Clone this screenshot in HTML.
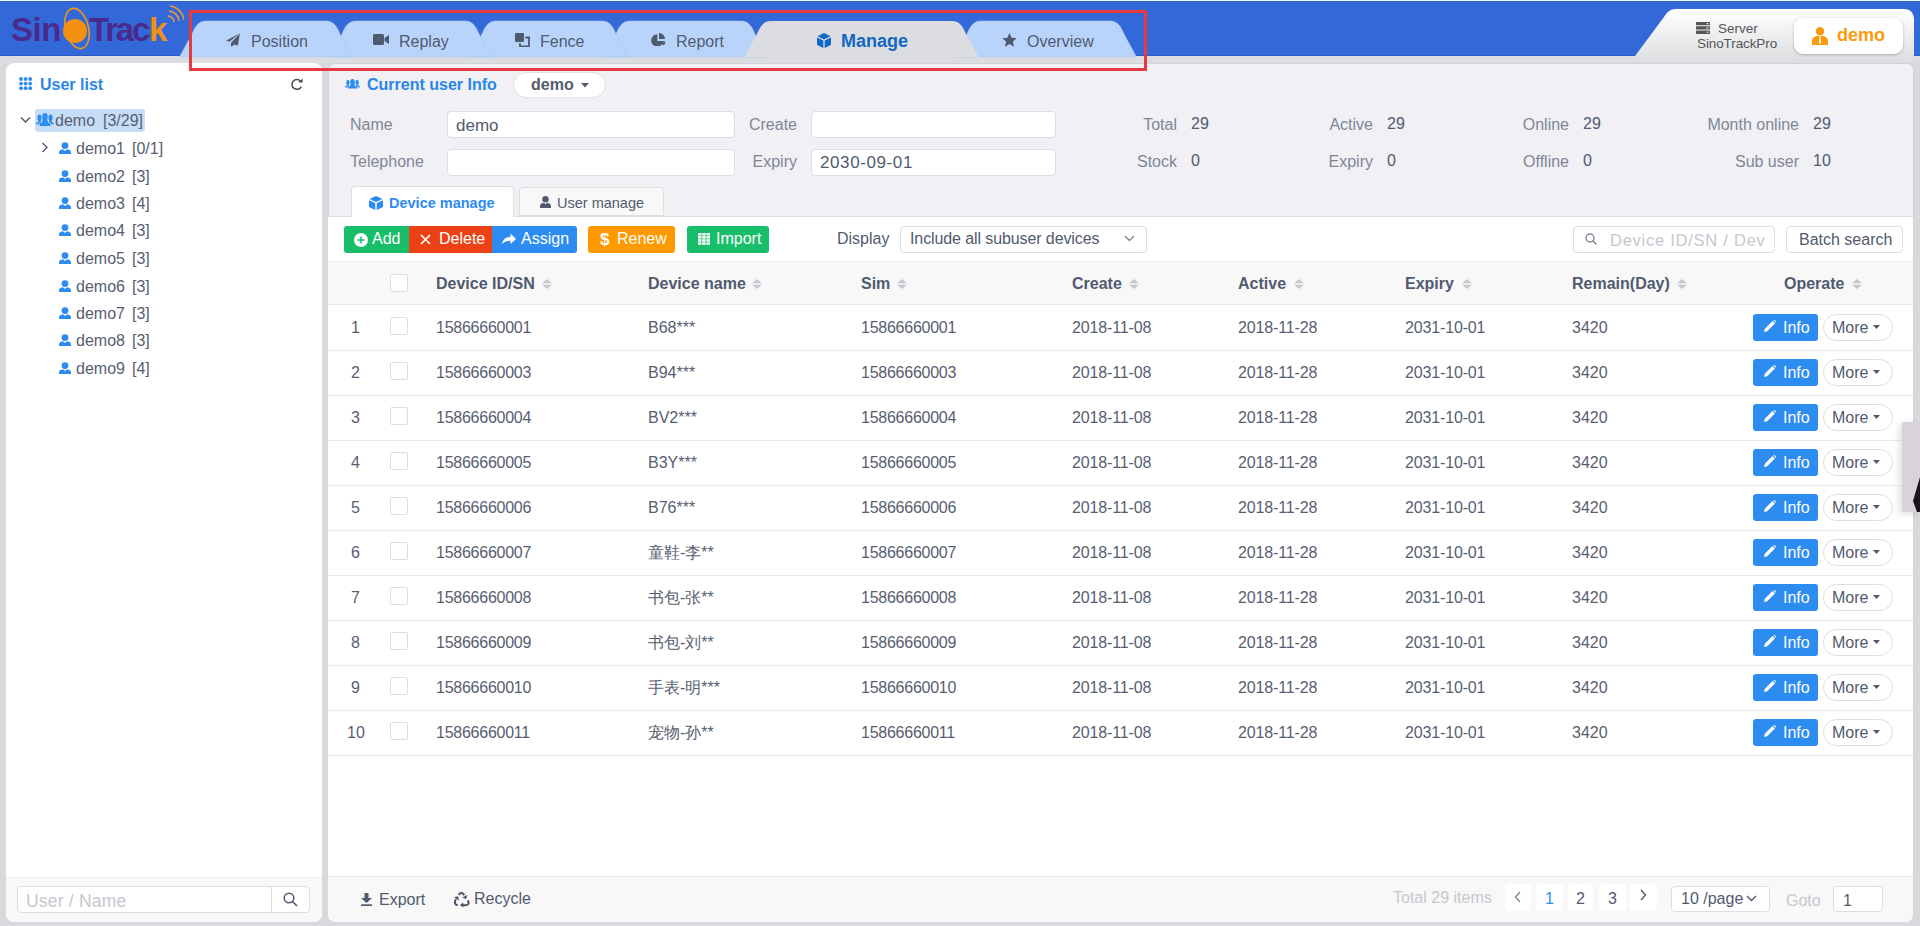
<!DOCTYPE html><html><head><meta charset="utf-8"><style>
html,body{margin:0;padding:0;width:1920px;height:926px;overflow:hidden;background:#d8d9dc;font-family:"Liberation Sans", sans-serif;}
.t{position:absolute;white-space:pre;font-family:"Liberation Sans", sans-serif;}
.r{position:absolute;box-sizing:border-box;}
</style></head><body>
<div class="r" style="left:0px;top:0px;width:1920px;height:56px;background:#3368d9;"></div>
<div class="r" style="left:0px;top:0px;width:1920px;height:1px;background:#e4fafe;"></div>
<div class="r" style="left:0px;top:1px;width:1920px;height:1px;background:#3760b4;"></div>
<div class="r" style="left:0px;top:55px;width:1920px;height:1px;background:#2b5cc4;"></div>
<div class="r" style="left:0px;top:56px;width:1920px;height:7px;background:#dcdde0;"></div>
<svg class="r" style="left:8px;top:4px" width="176" height="50" viewBox="0 0 176 50">
<ellipse cx="69" cy="24.5" rx="11.5" ry="20.5" transform="rotate(-14 69 24.5)" fill="none" stroke="#f0961a" stroke-width="1.6"/>
<circle cx="67" cy="27" r="12" fill="#f49010"/>
<text x="3" y="37" font-family="Liberation Sans" font-weight="bold" font-size="33" fill="#4a2a8c" letter-spacing="-0.5">Sin</text>
<text x="81" y="37" font-family="Liberation Sans" font-weight="bold" font-size="33" fill="#4a2a8c" letter-spacing="-2.2">Trac</text>
<text x="141" y="37" font-family="Liberation Sans" font-weight="bold" font-size="33" fill="#f49010">k</text>
<path d="M160 12 A6 6 0 0 1 166 18" fill="none" stroke="#e99a3a" stroke-width="1.6"/>
<path d="M161 7 A11 11 0 0 1 171 17" fill="none" stroke="#e99a3a" stroke-width="1.6"/>
<path d="M162 2 A16 16 0 0 1 176 16" fill="none" stroke="#e99a3a" stroke-width="1.6"/>
</svg>
<svg class="r" style="left:0px;top:0px" width="1200" height="63" viewBox="0 0 1200 63"><path d="M954.5,57 L967,34 C970,27 973,21 981,21 L1110,21 C1118,21 1121,27 1124,34 L1136.5,57 Z" fill="#b9d4fb" stroke="#a9c6f2" stroke-width="0.6"/><path d="M603.5,57 L616,34 C619,27 622,21 630,21 L741,21 C749,21 752,27 755,34 L767.5,57 Z" fill="#b9d4fb" stroke="#a9c6f2" stroke-width="0.6"/><path d="M469.5,57 L482,34 C485,27 488,21 496,21 L602,21 C610,21 613,27 616,34 L628.5,57 Z" fill="#b9d4fb" stroke="#a9c6f2" stroke-width="0.6"/><path d="M329.5,57 L342,34 C345,27 348,21 356,21 L465,21 C473,21 476,27 479,34 L491.5,57 Z" fill="#b9d4fb" stroke="#a9c6f2" stroke-width="0.6"/><path d="M179.5,57 L192,34 C195,27 198,21 206,21 L326,21 C334,21 337,27 340,34 L352.5,57 Z" fill="#b9d4fb" stroke="#a9c6f2" stroke-width="0.6"/><path d="M744.5,57 L757,34 C760,27 763,21 771,21 L952,21 C960,21 963,27 966,34 L978.5,57 Z" fill="#dcdde0"/></svg>
<svg class="r" style="left:226px;top:33px" width="15" height="14" viewBox="0 0 15 14"><path d="M13 0.7 L0.2 7.4 L3.5 8.7 Z" fill="#505a6e"/><path d="M13.9 0.3 L4.9 9.9 L5.1 13.7 L8.5 11.6 L11.9 12.6 Z" fill="#505a6e"/></svg>
<div class="t" style="left:251px;top:33px;font-size:16px;line-height:18px;color:#4f5b70;">Position</div>
<svg class="r" style="left:373px;top:34px" width="17" height="11" viewBox="0 0 17 11"><rect x="0" y="0" width="11" height="11" rx="1.5" fill="#505a6e"/><path d="M11.5 4 L16 1 L16 10 L11.5 7 Z" fill="#505a6e"/></svg>
<div class="t" style="left:399px;top:33px;font-size:16px;line-height:18px;color:#4f5b70;">Replay</div>
<svg class="r" style="left:515px;top:33px" width="15" height="14" viewBox="0 0 15 14"><rect x="0" y="0" width="9" height="9" rx="1" fill="#505a6e"/><path d="M10.3 4.5 H14 V13.5 H5 V10.2" fill="none" stroke="#505a6e" stroke-width="1.8"/></svg>
<div class="t" style="left:540px;top:33px;font-size:16px;line-height:18px;color:#4f5b70;">Fence</div>
<svg class="r" style="left:651px;top:33px" width="15" height="13" viewBox="0 0 15 13"><path d="M6.3 1.2 A6.2 6.2 0 1 0 12.5 8 L6.3 8 Z" fill="#505a6e"/><path d="M8 0 A6 6 0 0 1 14 6 L8 6 Z" fill="#505a6e"/><path d="M8.3 8.5 L14.5 8.5 A6 6 0 0 1 12.6 12.6 Z" fill="#505a6e"/></svg>
<div class="t" style="left:676px;top:33px;font-size:16px;line-height:18px;color:#4f5b70;">Report</div>
<svg class="r" style="left:817px;top:33px" width="14" height="15" viewBox="0 0 14 15"><path d="M7 0 L13.5 3.2 L7 6.4 L0.5 3.2 Z" fill="#0f67c6"/><path d="M0 4.4 L6.3 7.5 L6.3 15 L0 11.8 Z" fill="#0f67c6"/><path d="M14 4.4 L7.7 7.5 L7.7 15 L14 11.8 Z" fill="#0f67c6"/></svg>
<div class="t" style="left:841px;top:31px;font-size:18px;line-height:20px;color:#0f67c6;font-weight:bold;">Manage</div>
<svg class="r" style="left:1002px;top:33px" width="15" height="14" viewBox="0 0 15 14"><path d="M7.5 0 L9.6 4.7 L14.8 5.2 L10.9 8.6 L12 13.8 L7.5 11.1 L3 13.8 L4.1 8.6 L0.2 5.2 L5.4 4.7 Z" fill="#505a6e"/></svg>
<div class="t" style="left:1027px;top:33px;font-size:16px;line-height:18px;color:#4f5b70;">Overview</div>
<svg class="r" style="left:1630px;top:5px" width="290" height="58" viewBox="0 0 290 58"><defs><linearGradient id="hg" x1="0" y1="0" x2="0" y2="1"><stop offset="0" stop-color="#ffffff"/><stop offset="1" stop-color="#dcdde0"/></linearGradient></defs>
<path d="M5,51 L34,12 C37,7 40,4 46,4 L274,4 C280,4 284,8 284,14 L284,58 L0,58 Z" fill="url(#hg)"/></svg>
<svg class="r" style="left:1696px;top:22px" width="14" height="12" viewBox="0 0 14 12"><rect x="0" y="0" width="14" height="3.3" rx="0.6" fill="#555"/><rect x="0" y="4.3" width="14" height="3.3" rx="0.6" fill="#555"/><rect x="0" y="8.6" width="14" height="3.3" rx="0.6" fill="#555"/><rect x="10.5" y="1" width="2" height="1.2" fill="#ddd"/><rect x="10.5" y="5.3" width="2" height="1.2" fill="#ddd"/><rect x="10.5" y="9.6" width="2" height="1.2" fill="#ddd"/></svg>
<div class="t" style="left:1718px;top:21px;font-size:13.5px;line-height:15px;color:#555;">Server</div>
<div class="t" style="left:1697px;top:36px;font-size:13.5px;line-height:15px;color:#555;letter-spacing:-0.1px;">SinoTrackPro</div>
<div class="r" style="left:1794px;top:18px;width:109px;height:36px;background:#fff;border-radius:9px;box-shadow:0 1px 3px rgba(0,0,0,0.25);"></div>
<svg class="r" style="left:1812px;top:27px" width="16" height="18" viewBox="0 0 16 18"><circle cx="8" cy="4.2" r="4.2" fill="#f99b0a"/><path d="M0 18 L0 14 C0 10.5 3 9 5.5 9 L10.5 9 C13 9 16 10.5 16 14 L16 18 Z" fill="#f99b0a"/><path d="M7 9.5 L9 9.5 L8.6 11 L9 16 L8 17 L7 16 L7.4 11 Z" fill="#fff"/></svg>
<div class="t" style="left:1837px;top:25px;font-size:18px;line-height:20px;color:#f99b0a;font-weight:bold;">demo</div>
<div class="r" style="left:6px;top:63px;width:316px;height:859px;background:#fff;border-radius:8px;"></div>
<svg class="r" style="left:19px;top:77px" width="14" height="14" viewBox="0 0 14 14"><circle cx="2.0" cy="2.0" r="1.9" fill="#2d8cf0"/><circle cx="6.6" cy="2.0" r="1.9" fill="#2d8cf0"/><circle cx="11.2" cy="2.0" r="1.9" fill="#2d8cf0"/><circle cx="2.0" cy="6.6" r="1.9" fill="#2d8cf0"/><circle cx="6.6" cy="6.6" r="1.9" fill="#2d8cf0"/><circle cx="11.2" cy="6.6" r="1.9" fill="#2d8cf0"/><circle cx="2.0" cy="11.2" r="1.9" fill="#2d8cf0"/><circle cx="6.6" cy="11.2" r="1.9" fill="#2d8cf0"/><circle cx="11.2" cy="11.2" r="1.9" fill="#2d8cf0"/></svg>
<div class="t" style="left:40px;top:76px;font-size:16px;line-height:18px;color:#2a86e6;font-weight:bold;">User list</div>
<svg class="r" style="left:290px;top:77px" width="14" height="14" viewBox="0 0 14 14"><path d="M10.6 4.2 A4.9 4.9 0 1 0 11.3 9.6" fill="none" stroke="#4a4a4a" stroke-width="1.5"/><path d="M8.3 5.6 L12.6 5.6 L12.6 1.4 Z" fill="#4a4a4a"/></svg>
<svg class="r" style="left:20px;top:116px" width="11" height="8" viewBox="0 0 11 8"><path d="M1 1.5 L5.5 6 L10 1.5" fill="none" stroke="#515a6e" stroke-width="1.4"/></svg>
<div class="r" style="left:35px;top:109px;width:110px;height:23px;background:#c6ddf8;border-radius:3px;"></div>
<svg class="r" style="left:36px;top:113px" width="18" height="14" viewBox="0 0 18 14"><g transform="scale(1.2 1.35)"><ellipse cx="7.5" cy="3" rx="2.3" ry="3" fill="#2d8cf0"/><path d="M5.6 5 L9.4 5 L10 7.2 L12 7.5 L12 9.6 L3 9.6 L3 7.5 L5 7.2 Z" fill="#2d8cf0"/><ellipse cx="2.9" cy="3.5" rx="1.7" ry="2.4" fill="#2d8cf0"/><path d="M1.9 5.5 L3.9 5.5 L4.3 7 L2.6 7.3 L2.6 8.4 L0 8.4 L0.3 7.2 L1.6 6.8 Z" fill="#2d8cf0"/><ellipse cx="12.1" cy="3.5" rx="1.7" ry="2.4" fill="#2d8cf0"/><path d="M13.1 5.5 L11.1 5.5 L10.7 7 L12.4 7.3 L12.4 8.4 L15 8.4 L14.7 7.2 L13.4 6.8 Z" fill="#2d8cf0"/></g></svg>
<div class="t" style="left:55px;top:112px;font-size:16px;line-height:18px;color:#575e70;">demo</div>
<div class="t" style="left:103px;top:112px;font-size:16px;line-height:18px;color:#575e70;">[3/29]</div>
<svg class="r" style="left:41px;top:142px" width="8" height="11" viewBox="0 0 8 11"><path d="M1.5 1 L6 5.5 L1.5 10" fill="none" stroke="#515a6e" stroke-width="1.4"/></svg>
<svg class="r" style="left:59px;top:142px" width="12" height="12" viewBox="0 0 12 12"><circle cx="6" cy="3.6" r="3.4" fill="#2d8cf0"/><path d="M0 12 V10.5 C0 8 2.5 7.5 4 7.2 L6 9 L8 7.2 C9.5 7.5 12 8 12 10.5 V12 Z" fill="#2d8cf0"/></svg>
<div class="t" style="left:76px;top:140px;font-size:16px;line-height:18px;color:#575e70;">demo1</div>
<div class="t" style="left:132px;top:140px;font-size:16px;line-height:18px;color:#575e70;">[0/1]</div>
<svg class="r" style="left:59px;top:170px" width="12" height="12" viewBox="0 0 12 12"><circle cx="6" cy="3.6" r="3.4" fill="#2d8cf0"/><path d="M0 12 V10.5 C0 8 2.5 7.5 4 7.2 L6 9 L8 7.2 C9.5 7.5 12 8 12 10.5 V12 Z" fill="#2d8cf0"/></svg>
<div class="t" style="left:76px;top:168px;font-size:16px;line-height:18px;color:#575e70;">demo2</div>
<div class="t" style="left:132px;top:168px;font-size:16px;line-height:18px;color:#575e70;">[3]</div>
<svg class="r" style="left:59px;top:197px" width="12" height="12" viewBox="0 0 12 12"><circle cx="6" cy="3.6" r="3.4" fill="#2d8cf0"/><path d="M0 12 V10.5 C0 8 2.5 7.5 4 7.2 L6 9 L8 7.2 C9.5 7.5 12 8 12 10.5 V12 Z" fill="#2d8cf0"/></svg>
<div class="t" style="left:76px;top:195px;font-size:16px;line-height:18px;color:#575e70;">demo3</div>
<div class="t" style="left:132px;top:195px;font-size:16px;line-height:18px;color:#575e70;">[4]</div>
<svg class="r" style="left:59px;top:224px" width="12" height="12" viewBox="0 0 12 12"><circle cx="6" cy="3.6" r="3.4" fill="#2d8cf0"/><path d="M0 12 V10.5 C0 8 2.5 7.5 4 7.2 L6 9 L8 7.2 C9.5 7.5 12 8 12 10.5 V12 Z" fill="#2d8cf0"/></svg>
<div class="t" style="left:76px;top:222px;font-size:16px;line-height:18px;color:#575e70;">demo4</div>
<div class="t" style="left:132px;top:222px;font-size:16px;line-height:18px;color:#575e70;">[3]</div>
<svg class="r" style="left:59px;top:252px" width="12" height="12" viewBox="0 0 12 12"><circle cx="6" cy="3.6" r="3.4" fill="#2d8cf0"/><path d="M0 12 V10.5 C0 8 2.5 7.5 4 7.2 L6 9 L8 7.2 C9.5 7.5 12 8 12 10.5 V12 Z" fill="#2d8cf0"/></svg>
<div class="t" style="left:76px;top:250px;font-size:16px;line-height:18px;color:#575e70;">demo5</div>
<div class="t" style="left:132px;top:250px;font-size:16px;line-height:18px;color:#575e70;">[3]</div>
<svg class="r" style="left:59px;top:280px" width="12" height="12" viewBox="0 0 12 12"><circle cx="6" cy="3.6" r="3.4" fill="#2d8cf0"/><path d="M0 12 V10.5 C0 8 2.5 7.5 4 7.2 L6 9 L8 7.2 C9.5 7.5 12 8 12 10.5 V12 Z" fill="#2d8cf0"/></svg>
<div class="t" style="left:76px;top:278px;font-size:16px;line-height:18px;color:#575e70;">demo6</div>
<div class="t" style="left:132px;top:278px;font-size:16px;line-height:18px;color:#575e70;">[3]</div>
<svg class="r" style="left:59px;top:307px" width="12" height="12" viewBox="0 0 12 12"><circle cx="6" cy="3.6" r="3.4" fill="#2d8cf0"/><path d="M0 12 V10.5 C0 8 2.5 7.5 4 7.2 L6 9 L8 7.2 C9.5 7.5 12 8 12 10.5 V12 Z" fill="#2d8cf0"/></svg>
<div class="t" style="left:76px;top:305px;font-size:16px;line-height:18px;color:#575e70;">demo7</div>
<div class="t" style="left:132px;top:305px;font-size:16px;line-height:18px;color:#575e70;">[3]</div>
<svg class="r" style="left:59px;top:334px" width="12" height="12" viewBox="0 0 12 12"><circle cx="6" cy="3.6" r="3.4" fill="#2d8cf0"/><path d="M0 12 V10.5 C0 8 2.5 7.5 4 7.2 L6 9 L8 7.2 C9.5 7.5 12 8 12 10.5 V12 Z" fill="#2d8cf0"/></svg>
<div class="t" style="left:76px;top:332px;font-size:16px;line-height:18px;color:#575e70;">demo8</div>
<div class="t" style="left:132px;top:332px;font-size:16px;line-height:18px;color:#575e70;">[3]</div>
<svg class="r" style="left:59px;top:362px" width="12" height="12" viewBox="0 0 12 12"><circle cx="6" cy="3.6" r="3.4" fill="#2d8cf0"/><path d="M0 12 V10.5 C0 8 2.5 7.5 4 7.2 L6 9 L8 7.2 C9.5 7.5 12 8 12 10.5 V12 Z" fill="#2d8cf0"/></svg>
<div class="t" style="left:76px;top:360px;font-size:16px;line-height:18px;color:#575e70;">demo9</div>
<div class="t" style="left:132px;top:360px;font-size:16px;line-height:18px;color:#575e70;">[4]</div>
<div class="r" style="left:6px;top:877px;width:316px;height:45px;background:#f8f8f9;border-top:1px solid #e8eaec;border-radius:0 0 8px 8px;"></div>
<div class="r" style="left:17px;top:886px;width:293px;height:27px;background:#fff;border:1px solid #dcdee2;border-radius:4px;"></div>
<div class="r" style="left:271px;top:887px;width:1px;height:25px;background:#dcdee2;"></div>
<div class="t" style="left:26px;top:891px;font-size:17.5px;line-height:20px;color:#c5c8ce;letter-spacing:0.2px;">User / Name</div>
<svg class="r" style="left:283px;top:892px" width="15" height="15" viewBox="0 0 15 15"><circle cx="6" cy="6" r="4.8" fill="none" stroke="#515a6e" stroke-width="1.5"/><path d="M9.5 9.5 L13.5 13.5" stroke="#515a6e" stroke-width="1.7" stroke-linecap="round"/></svg>
<div class="r" style="left:328px;top:63px;width:1586px;height:859px;background:#f0f0f5;border:1px solid #d2d3d7;border-radius:7px;"></div>
<div class="r" style="left:328px;top:217px;width:1585px;height:660px;background:#fff;"></div>
<div class="r" style="left:328px;top:876px;width:1585px;height:46px;background:#f8f8f9;border-top:1px solid #e8eaec;border-radius:0 0 7px 7px;"></div>
<svg class="r" style="left:345px;top:79px" width="15" height="10" viewBox="0 0 15 10"><ellipse cx="7.5" cy="3" rx="2.3" ry="3" fill="#2d8cf0"/><path d="M5.6 5 L9.4 5 L10 7.2 L12 7.5 L12 9.6 L3 9.6 L3 7.5 L5 7.2 Z" fill="#2d8cf0"/><ellipse cx="2.9" cy="3.5" rx="1.7" ry="2.4" fill="#2d8cf0"/><path d="M1.9 5.5 L3.9 5.5 L4.3 7 L2.6 7.3 L2.6 8.4 L0 8.4 L0.3 7.2 L1.6 6.8 Z" fill="#2d8cf0"/><ellipse cx="12.1" cy="3.5" rx="1.7" ry="2.4" fill="#2d8cf0"/><path d="M13.1 5.5 L11.1 5.5 L10.7 7 L12.4 7.3 L12.4 8.4 L15 8.4 L14.7 7.2 L13.4 6.8 Z" fill="#2d8cf0"/></svg>
<div class="t" style="left:367px;top:76px;font-size:16px;line-height:18px;color:#2a86e6;font-weight:bold;">Current user Info</div>
<div class="r" style="left:513px;top:72px;width:93px;height:26px;background:#fff;border:1px solid #dfe1e5;border-radius:13px;"></div>
<div class="t" style="left:531px;top:76px;font-size:16px;line-height:18px;color:#515a6e;font-weight:bold;">demo</div>
<svg class="r" style="left:581px;top:83px" width="8" height="5" viewBox="0 0 8 5"><path d="M0 0 L8 0 L4 4.5 Z" fill="#515a6e"/></svg>
<div class="t" style="left:350px;top:116px;font-size:16px;line-height:18px;color:#808695;">Name</div>
<div class="t" style="left:350px;top:153px;font-size:16px;line-height:18px;color:#808695;">Telephone</div>
<div class="r" style="left:447px;top:111px;width:288px;height:27px;background:#fff;border:1px solid #dcdee2;border-radius:4px;"></div>
<div class="r" style="left:447px;top:149px;width:288px;height:27px;background:#fff;border:1px solid #dcdee2;border-radius:4px;"></div>
<div class="t" style="left:456px;top:116px;font-size:17px;line-height:19px;color:#515a6e;">demo</div>
<div class="t" style="right:1123px;top:116px;font-size:16px;line-height:18px;color:#808695;">Create</div>
<div class="t" style="right:1123px;top:153px;font-size:16px;line-height:18px;color:#808695;">Expiry</div>
<div class="r" style="left:811px;top:111px;width:245px;height:27px;background:#fff;border:1px solid #dcdee2;border-radius:4px;"></div>
<div class="r" style="left:811px;top:149px;width:245px;height:27px;background:#fff;border:1px solid #dcdee2;border-radius:4px;"></div>
<div class="t" style="left:820px;top:153px;font-size:17px;line-height:19px;color:#515a6e;letter-spacing:0.6px;">2030-09-01</div>
<div class="t" style="right:743px;top:116px;font-size:16px;line-height:18px;color:#808695;">Total</div>
<div class="t" style="left:1191px;top:115px;font-size:16px;line-height:18px;color:#515a6e;">29</div>
<div class="t" style="right:743px;top:153px;font-size:16px;line-height:18px;color:#808695;">Stock</div>
<div class="t" style="left:1191px;top:152px;font-size:16px;line-height:18px;color:#515a6e;">0</div>
<div class="t" style="right:547px;top:116px;font-size:16px;line-height:18px;color:#808695;">Active</div>
<div class="t" style="left:1387px;top:115px;font-size:16px;line-height:18px;color:#515a6e;">29</div>
<div class="t" style="right:547px;top:153px;font-size:16px;line-height:18px;color:#808695;">Expiry</div>
<div class="t" style="left:1387px;top:152px;font-size:16px;line-height:18px;color:#515a6e;">0</div>
<div class="t" style="right:351px;top:116px;font-size:16px;line-height:18px;color:#808695;">Online</div>
<div class="t" style="left:1583px;top:115px;font-size:16px;line-height:18px;color:#515a6e;">29</div>
<div class="t" style="right:351px;top:153px;font-size:16px;line-height:18px;color:#808695;">Offline</div>
<div class="t" style="left:1583px;top:152px;font-size:16px;line-height:18px;color:#515a6e;">0</div>
<div class="t" style="right:121px;top:116px;font-size:16px;line-height:18px;color:#808695;">Month online</div>
<div class="t" style="left:1813px;top:115px;font-size:16px;line-height:18px;color:#515a6e;">29</div>
<div class="t" style="right:121px;top:153px;font-size:16px;line-height:18px;color:#808695;">Sub user</div>
<div class="t" style="left:1813px;top:152px;font-size:16px;line-height:18px;color:#515a6e;">10</div>
<div class="r" style="left:328px;top:216px;width:1585px;height:1px;background:#dcdee2;"></div>
<div class="r" style="left:351px;top:186px;width:163px;height:31px;background:#fff;border:1px solid #dcdee2;border-bottom:none;border-radius:4px 4px 0 0;"></div>
<div class="r" style="left:519px;top:187px;width:145px;height:29px;background:#f8f8f9;border:1px solid #dcdee2;border-radius:4px 4px 0 0;"></div>
<svg class="r" style="left:369px;top:196px" width="14" height="14" viewBox="0 0 14 14"><path d="M7 0 L13.5 3 L7 6 L0.5 3 Z" fill="#2d8cf0"/><path d="M0 4.2 L6.3 7.2 L6.3 14 L0 11 Z" fill="#2d8cf0"/><path d="M14 4.2 L7.7 7.2 L7.7 14 L14 11 Z" fill="#2d8cf0"/></svg>
<div class="t" style="left:389px;top:195px;font-size:14.5px;line-height:16px;color:#2d8cf0;font-weight:bold;">Device manage</div>
<svg class="r" style="left:540px;top:196px" width="11" height="12" viewBox="0 0 11 12"><circle cx="5.5" cy="3.3" r="3.2" fill="#515a6e"/><path d="M0 12 V10 C0 7.8 2.5 7 4 6.8 L5.5 8.3 L7 6.8 C8.5 7 11 7.8 11 10 V12 Z" fill="#515a6e"/></svg>
<div class="t" style="left:557px;top:195px;font-size:14.5px;line-height:16px;color:#515a6e;">User manage</div>
<div class="r" style="left:344px;top:226px;width:65px;height:27px;background:#19be6b;border-radius:3px 0 0 3px;"></div>
<div class="r" style="left:409px;top:226px;width:83px;height:27px;background:#ed4014;"></div>
<div class="r" style="left:492px;top:226px;width:85px;height:27px;background:#2d8cf0;border-radius:0 3px 3px 0;"></div>
<div class="r" style="left:588px;top:226px;width:87px;height:27px;background:#ff9900;border-radius:3px;"></div>
<div class="r" style="left:687px;top:226px;width:82px;height:27px;background:#19be6b;border-radius:3px;"></div>
<svg class="r" style="left:354px;top:233px" width="14" height="14" viewBox="0 0 14 14"><circle cx="7" cy="7" r="7" fill="#fff"/><path d="M7 3.5 V10.5 M3.5 7 H10.5" stroke="#19be6b" stroke-width="1.6"/></svg>
<div class="t" style="left:372px;top:230px;font-size:16px;line-height:18px;color:#fff;">Add</div>
<svg class="r" style="left:420px;top:234px" width="11" height="11" viewBox="0 0 11 11"><path d="M1 1 L10 10 M10 1 L1 10" stroke="#fff" stroke-width="1.7"/></svg>
<div class="t" style="left:439px;top:230px;font-size:16px;line-height:18px;color:#fff;">Delete</div>
<svg class="r" style="left:502px;top:233px" width="14" height="12" viewBox="0 0 14 12"><path d="M0 11 C1 6 4 4 8.5 4 V0.5 L14 6 L8.5 11 V7.8 C5 7.8 2.5 8.5 0 11 Z" fill="#fff"/></svg>
<div class="t" style="left:521px;top:230px;font-size:16px;line-height:18px;color:#fff;">Assign</div>
<div class="t" style="left:600px;top:230px;font-size:17px;line-height:19px;color:#fff;font-weight:bold;">$</div>
<div class="t" style="left:617px;top:230px;font-size:16px;line-height:18px;color:#fff;">Renew</div>
<svg class="r" style="left:698px;top:233px" width="12" height="12" viewBox="0 0 12 12"><rect x="0.0" y="0.0" width="3.5" height="2.5" fill="#fff"/><rect x="4.2" y="0.0" width="3.5" height="2.5" fill="#fff"/><rect x="8.4" y="0.0" width="3.5" height="2.5" fill="#fff"/><rect x="0.0" y="3.1" width="3.5" height="2.5" fill="#fff"/><rect x="4.2" y="3.1" width="3.5" height="2.5" fill="#fff"/><rect x="8.4" y="3.1" width="3.5" height="2.5" fill="#fff"/><rect x="0.0" y="6.2" width="3.5" height="2.5" fill="#fff"/><rect x="4.2" y="6.2" width="3.5" height="2.5" fill="#fff"/><rect x="8.4" y="6.2" width="3.5" height="2.5" fill="#fff"/><rect x="0.0" y="9.3" width="3.5" height="2.5" fill="#fff"/><rect x="4.2" y="9.3" width="3.5" height="2.5" fill="#fff"/><rect x="8.4" y="9.3" width="3.5" height="2.5" fill="#fff"/></svg>
<div class="t" style="left:716px;top:230px;font-size:16px;line-height:18px;color:#fff;">Import</div>
<div class="t" style="left:837px;top:230px;font-size:16px;line-height:18px;color:#515a6e;">Display</div>
<div class="r" style="left:900px;top:226px;width:247px;height:27px;background:#fff;border:1px solid #dcdee2;border-radius:4px;"></div>
<div class="t" style="left:910px;top:230px;font-size:16px;line-height:18px;color:#515a6e;letter-spacing:-0.1px;">Include all subuser devices</div>
<svg class="r" style="left:1124px;top:235px" width="11" height="7" viewBox="0 0 11 7"><path d="M1 1 L5.5 5.5 L10 1" fill="none" stroke="#808695" stroke-width="1.4"/></svg>
<div class="r" style="left:1573px;top:226px;width:202px;height:27px;background:#fff;border:1px solid #dcdee2;border-radius:4px;"></div>
<svg class="r" style="left:1585px;top:233px" width="12" height="12" viewBox="0 0 12 12"><circle cx="5" cy="5" r="4" fill="none" stroke="#808695" stroke-width="1.4"/><path d="M8 8 L11 11" stroke="#808695" stroke-width="1.5" stroke-linecap="round"/></svg>
<div class="t" style="left:1610px;top:231px;font-size:16.5px;line-height:19px;color:#c5c8ce;letter-spacing:0.75px;">Device ID/SN / Dev</div>
<div class="r" style="left:1786px;top:226px;width:117px;height:27px;background:#fff;border:1px solid #dcdee2;border-radius:4px;"></div>
<div class="t" style="left:1799px;top:231px;font-size:16px;line-height:18px;color:#515a6e;">Batch search</div>
<div class="r" style="left:328px;top:261px;width:1585px;height:1px;background:#e8eaec;"></div>
<div class="r" style="left:328px;top:262px;width:1585px;height:42px;background:#f8f8f9;"></div>
<div class="r" style="left:328px;top:304px;width:1585px;height:1px;background:#e8eaec;"></div>
<div class="r" style="left:390px;top:274px;width:18px;height:18px;background:#fff;border:1px solid #dcdee2;border-radius:2px;"></div>
<div class="t" style="left:436px;top:275px;font-size:16px;line-height:18px;color:#515a6e;font-weight:bold;">Device ID/SN</div>
<svg class="r" style="left:542px;top:279px" width="10" height="10" viewBox="0 0 10 10"><path d="M5 0 L10 4.2 L0 4.2 Z" fill="#c5c8ce"/><path d="M0 5.8 L10 5.8 L5 10 Z" fill="#c5c8ce"/></svg>
<div class="t" style="left:648px;top:275px;font-size:16px;line-height:18px;color:#515a6e;font-weight:bold;">Device name</div>
<svg class="r" style="left:752px;top:279px" width="10" height="10" viewBox="0 0 10 10"><path d="M5 0 L10 4.2 L0 4.2 Z" fill="#c5c8ce"/><path d="M0 5.8 L10 5.8 L5 10 Z" fill="#c5c8ce"/></svg>
<div class="t" style="left:861px;top:275px;font-size:16px;line-height:18px;color:#515a6e;font-weight:bold;">Sim</div>
<svg class="r" style="left:897px;top:279px" width="10" height="10" viewBox="0 0 10 10"><path d="M5 0 L10 4.2 L0 4.2 Z" fill="#c5c8ce"/><path d="M0 5.8 L10 5.8 L5 10 Z" fill="#c5c8ce"/></svg>
<div class="t" style="left:1072px;top:275px;font-size:16px;line-height:18px;color:#515a6e;font-weight:bold;">Create</div>
<svg class="r" style="left:1129px;top:279px" width="10" height="10" viewBox="0 0 10 10"><path d="M5 0 L10 4.2 L0 4.2 Z" fill="#c5c8ce"/><path d="M0 5.8 L10 5.8 L5 10 Z" fill="#c5c8ce"/></svg>
<div class="t" style="left:1238px;top:275px;font-size:16px;line-height:18px;color:#515a6e;font-weight:bold;">Active</div>
<svg class="r" style="left:1294px;top:279px" width="10" height="10" viewBox="0 0 10 10"><path d="M5 0 L10 4.2 L0 4.2 Z" fill="#c5c8ce"/><path d="M0 5.8 L10 5.8 L5 10 Z" fill="#c5c8ce"/></svg>
<div class="t" style="left:1405px;top:275px;font-size:16px;line-height:18px;color:#515a6e;font-weight:bold;">Expiry</div>
<svg class="r" style="left:1462px;top:279px" width="10" height="10" viewBox="0 0 10 10"><path d="M5 0 L10 4.2 L0 4.2 Z" fill="#c5c8ce"/><path d="M0 5.8 L10 5.8 L5 10 Z" fill="#c5c8ce"/></svg>
<div class="t" style="left:1572px;top:275px;font-size:16px;line-height:18px;color:#515a6e;font-weight:bold;">Remain(Day)</div>
<svg class="r" style="left:1677px;top:279px" width="10" height="10" viewBox="0 0 10 10"><path d="M5 0 L10 4.2 L0 4.2 Z" fill="#c5c8ce"/><path d="M0 5.8 L10 5.8 L5 10 Z" fill="#c5c8ce"/></svg>
<div class="t" style="left:1784px;top:275px;font-size:16px;line-height:18px;color:#515a6e;font-weight:bold;">Operate</div>
<svg class="r" style="left:1852px;top:279px" width="10" height="10" viewBox="0 0 10 10"><path d="M5 0 L10 4.2 L0 4.2 Z" fill="#c5c8ce"/><path d="M0 5.8 L10 5.8 L5 10 Z" fill="#c5c8ce"/></svg>
<div class="r" style="left:328px;top:350px;width:1585px;height:1px;background:#e8eaec;"></div>
<div class="t" style="left:351px;top:319px;font-size:16px;line-height:18px;color:#575e70;">1</div>
<div class="r" style="left:390px;top:317px;width:18px;height:18px;background:#fff;border:1px solid #dcdee2;border-radius:2px;"></div>
<div class="t" style="left:436px;top:319px;font-size:16px;line-height:18px;color:#575e70;letter-spacing:-0.25px;">15866660001</div>
<div class="t" style="left:648px;top:319px;font-size:16px;line-height:18px;color:#575e70;">B68***</div>
<div class="t" style="left:861px;top:319px;font-size:16px;line-height:18px;color:#575e70;letter-spacing:-0.25px;">15866660001</div>
<div class="t" style="left:1072px;top:319px;font-size:16px;line-height:18px;color:#575e70;letter-spacing:-0.15px;">2018-11-08</div>
<div class="t" style="left:1238px;top:319px;font-size:16px;line-height:18px;color:#575e70;letter-spacing:-0.15px;">2018-11-28</div>
<div class="t" style="left:1405px;top:319px;font-size:16px;line-height:18px;color:#575e70;letter-spacing:-0.15px;">2031-10-01</div>
<div class="t" style="left:1572px;top:319px;font-size:16px;line-height:18px;color:#575e70;">3420</div>
<div class="r" style="left:1753px;top:314px;width:65px;height:27px;background:#2d8cf0;border-radius:3px;"></div>
<svg class="r" style="left:1764px;top:320px" width="12" height="12" viewBox="0 0 12 12"><path d="M0 12 L0.8 8.8 L8.5 1.1 L10.9 3.5 L3.2 11.2 Z M9.3 0.3 L10.3 -0.2 L12.2 1.7 L11.7 2.7 Z" fill="#fff"/></svg>
<div class="t" style="left:1783px;top:319px;font-size:16px;line-height:18px;color:#fff;">Info</div>
<div class="r" style="left:1823px;top:314px;width:70px;height:27px;background:#fff;border:1px solid #dcdee2;border-radius:14px;"></div>
<div class="t" style="left:1832px;top:319px;font-size:16px;line-height:18px;color:#515a6e;">More</div>
<svg class="r" style="left:1873px;top:325px" width="7" height="4" viewBox="0 0 7 4"><path d="M0 0 L7 0 L3.5 4 Z" fill="#515a6e"/></svg>
<div class="r" style="left:328px;top:395px;width:1585px;height:1px;background:#e8eaec;"></div>
<div class="t" style="left:351px;top:364px;font-size:16px;line-height:18px;color:#575e70;">2</div>
<div class="r" style="left:390px;top:362px;width:18px;height:18px;background:#fff;border:1px solid #dcdee2;border-radius:2px;"></div>
<div class="t" style="left:436px;top:364px;font-size:16px;line-height:18px;color:#575e70;letter-spacing:-0.25px;">15866660003</div>
<div class="t" style="left:648px;top:364px;font-size:16px;line-height:18px;color:#575e70;">B94***</div>
<div class="t" style="left:861px;top:364px;font-size:16px;line-height:18px;color:#575e70;letter-spacing:-0.25px;">15866660003</div>
<div class="t" style="left:1072px;top:364px;font-size:16px;line-height:18px;color:#575e70;letter-spacing:-0.15px;">2018-11-08</div>
<div class="t" style="left:1238px;top:364px;font-size:16px;line-height:18px;color:#575e70;letter-spacing:-0.15px;">2018-11-28</div>
<div class="t" style="left:1405px;top:364px;font-size:16px;line-height:18px;color:#575e70;letter-spacing:-0.15px;">2031-10-01</div>
<div class="t" style="left:1572px;top:364px;font-size:16px;line-height:18px;color:#575e70;">3420</div>
<div class="r" style="left:1753px;top:359px;width:65px;height:27px;background:#2d8cf0;border-radius:3px;"></div>
<svg class="r" style="left:1764px;top:365px" width="12" height="12" viewBox="0 0 12 12"><path d="M0 12 L0.8 8.8 L8.5 1.1 L10.9 3.5 L3.2 11.2 Z M9.3 0.3 L10.3 -0.2 L12.2 1.7 L11.7 2.7 Z" fill="#fff"/></svg>
<div class="t" style="left:1783px;top:364px;font-size:16px;line-height:18px;color:#fff;">Info</div>
<div class="r" style="left:1823px;top:359px;width:70px;height:27px;background:#fff;border:1px solid #dcdee2;border-radius:14px;"></div>
<div class="t" style="left:1832px;top:364px;font-size:16px;line-height:18px;color:#515a6e;">More</div>
<svg class="r" style="left:1873px;top:370px" width="7" height="4" viewBox="0 0 7 4"><path d="M0 0 L7 0 L3.5 4 Z" fill="#515a6e"/></svg>
<div class="r" style="left:328px;top:440px;width:1585px;height:1px;background:#e8eaec;"></div>
<div class="t" style="left:351px;top:409px;font-size:16px;line-height:18px;color:#575e70;">3</div>
<div class="r" style="left:390px;top:407px;width:18px;height:18px;background:#fff;border:1px solid #dcdee2;border-radius:2px;"></div>
<div class="t" style="left:436px;top:409px;font-size:16px;line-height:18px;color:#575e70;letter-spacing:-0.25px;">15866660004</div>
<div class="t" style="left:648px;top:409px;font-size:16px;line-height:18px;color:#575e70;">BV2***</div>
<div class="t" style="left:861px;top:409px;font-size:16px;line-height:18px;color:#575e70;letter-spacing:-0.25px;">15866660004</div>
<div class="t" style="left:1072px;top:409px;font-size:16px;line-height:18px;color:#575e70;letter-spacing:-0.15px;">2018-11-08</div>
<div class="t" style="left:1238px;top:409px;font-size:16px;line-height:18px;color:#575e70;letter-spacing:-0.15px;">2018-11-28</div>
<div class="t" style="left:1405px;top:409px;font-size:16px;line-height:18px;color:#575e70;letter-spacing:-0.15px;">2031-10-01</div>
<div class="t" style="left:1572px;top:409px;font-size:16px;line-height:18px;color:#575e70;">3420</div>
<div class="r" style="left:1753px;top:404px;width:65px;height:27px;background:#2d8cf0;border-radius:3px;"></div>
<svg class="r" style="left:1764px;top:410px" width="12" height="12" viewBox="0 0 12 12"><path d="M0 12 L0.8 8.8 L8.5 1.1 L10.9 3.5 L3.2 11.2 Z M9.3 0.3 L10.3 -0.2 L12.2 1.7 L11.7 2.7 Z" fill="#fff"/></svg>
<div class="t" style="left:1783px;top:409px;font-size:16px;line-height:18px;color:#fff;">Info</div>
<div class="r" style="left:1823px;top:404px;width:70px;height:27px;background:#fff;border:1px solid #dcdee2;border-radius:14px;"></div>
<div class="t" style="left:1832px;top:409px;font-size:16px;line-height:18px;color:#515a6e;">More</div>
<svg class="r" style="left:1873px;top:415px" width="7" height="4" viewBox="0 0 7 4"><path d="M0 0 L7 0 L3.5 4 Z" fill="#515a6e"/></svg>
<div class="r" style="left:328px;top:485px;width:1585px;height:1px;background:#e8eaec;"></div>
<div class="t" style="left:351px;top:454px;font-size:16px;line-height:18px;color:#575e70;">4</div>
<div class="r" style="left:390px;top:452px;width:18px;height:18px;background:#fff;border:1px solid #dcdee2;border-radius:2px;"></div>
<div class="t" style="left:436px;top:454px;font-size:16px;line-height:18px;color:#575e70;letter-spacing:-0.25px;">15866660005</div>
<div class="t" style="left:648px;top:454px;font-size:16px;line-height:18px;color:#575e70;">B3Y***</div>
<div class="t" style="left:861px;top:454px;font-size:16px;line-height:18px;color:#575e70;letter-spacing:-0.25px;">15866660005</div>
<div class="t" style="left:1072px;top:454px;font-size:16px;line-height:18px;color:#575e70;letter-spacing:-0.15px;">2018-11-08</div>
<div class="t" style="left:1238px;top:454px;font-size:16px;line-height:18px;color:#575e70;letter-spacing:-0.15px;">2018-11-28</div>
<div class="t" style="left:1405px;top:454px;font-size:16px;line-height:18px;color:#575e70;letter-spacing:-0.15px;">2031-10-01</div>
<div class="t" style="left:1572px;top:454px;font-size:16px;line-height:18px;color:#575e70;">3420</div>
<div class="r" style="left:1753px;top:449px;width:65px;height:27px;background:#2d8cf0;border-radius:3px;"></div>
<svg class="r" style="left:1764px;top:455px" width="12" height="12" viewBox="0 0 12 12"><path d="M0 12 L0.8 8.8 L8.5 1.1 L10.9 3.5 L3.2 11.2 Z M9.3 0.3 L10.3 -0.2 L12.2 1.7 L11.7 2.7 Z" fill="#fff"/></svg>
<div class="t" style="left:1783px;top:454px;font-size:16px;line-height:18px;color:#fff;">Info</div>
<div class="r" style="left:1823px;top:449px;width:70px;height:27px;background:#fff;border:1px solid #dcdee2;border-radius:14px;"></div>
<div class="t" style="left:1832px;top:454px;font-size:16px;line-height:18px;color:#515a6e;">More</div>
<svg class="r" style="left:1873px;top:460px" width="7" height="4" viewBox="0 0 7 4"><path d="M0 0 L7 0 L3.5 4 Z" fill="#515a6e"/></svg>
<div class="r" style="left:328px;top:530px;width:1585px;height:1px;background:#e8eaec;"></div>
<div class="t" style="left:351px;top:499px;font-size:16px;line-height:18px;color:#575e70;">5</div>
<div class="r" style="left:390px;top:497px;width:18px;height:18px;background:#fff;border:1px solid #dcdee2;border-radius:2px;"></div>
<div class="t" style="left:436px;top:499px;font-size:16px;line-height:18px;color:#575e70;letter-spacing:-0.25px;">15866660006</div>
<div class="t" style="left:648px;top:499px;font-size:16px;line-height:18px;color:#575e70;">B76***</div>
<div class="t" style="left:861px;top:499px;font-size:16px;line-height:18px;color:#575e70;letter-spacing:-0.25px;">15866660006</div>
<div class="t" style="left:1072px;top:499px;font-size:16px;line-height:18px;color:#575e70;letter-spacing:-0.15px;">2018-11-08</div>
<div class="t" style="left:1238px;top:499px;font-size:16px;line-height:18px;color:#575e70;letter-spacing:-0.15px;">2018-11-28</div>
<div class="t" style="left:1405px;top:499px;font-size:16px;line-height:18px;color:#575e70;letter-spacing:-0.15px;">2031-10-01</div>
<div class="t" style="left:1572px;top:499px;font-size:16px;line-height:18px;color:#575e70;">3420</div>
<div class="r" style="left:1753px;top:494px;width:65px;height:27px;background:#2d8cf0;border-radius:3px;"></div>
<svg class="r" style="left:1764px;top:500px" width="12" height="12" viewBox="0 0 12 12"><path d="M0 12 L0.8 8.8 L8.5 1.1 L10.9 3.5 L3.2 11.2 Z M9.3 0.3 L10.3 -0.2 L12.2 1.7 L11.7 2.7 Z" fill="#fff"/></svg>
<div class="t" style="left:1783px;top:499px;font-size:16px;line-height:18px;color:#fff;">Info</div>
<div class="r" style="left:1823px;top:494px;width:70px;height:27px;background:#fff;border:1px solid #dcdee2;border-radius:14px;"></div>
<div class="t" style="left:1832px;top:499px;font-size:16px;line-height:18px;color:#515a6e;">More</div>
<svg class="r" style="left:1873px;top:505px" width="7" height="4" viewBox="0 0 7 4"><path d="M0 0 L7 0 L3.5 4 Z" fill="#515a6e"/></svg>
<div class="r" style="left:328px;top:575px;width:1585px;height:1px;background:#e8eaec;"></div>
<div class="t" style="left:351px;top:544px;font-size:16px;line-height:18px;color:#575e70;">6</div>
<div class="r" style="left:390px;top:542px;width:18px;height:18px;background:#fff;border:1px solid #dcdee2;border-radius:2px;"></div>
<div class="t" style="left:436px;top:544px;font-size:16px;line-height:18px;color:#575e70;letter-spacing:-0.25px;">15866660007</div>
<div class="t" style="left:648px;top:544px;font-size:16px;line-height:18px;color:#575e70;">童鞋-李**</div>
<div class="t" style="left:861px;top:544px;font-size:16px;line-height:18px;color:#575e70;letter-spacing:-0.25px;">15866660007</div>
<div class="t" style="left:1072px;top:544px;font-size:16px;line-height:18px;color:#575e70;letter-spacing:-0.15px;">2018-11-08</div>
<div class="t" style="left:1238px;top:544px;font-size:16px;line-height:18px;color:#575e70;letter-spacing:-0.15px;">2018-11-28</div>
<div class="t" style="left:1405px;top:544px;font-size:16px;line-height:18px;color:#575e70;letter-spacing:-0.15px;">2031-10-01</div>
<div class="t" style="left:1572px;top:544px;font-size:16px;line-height:18px;color:#575e70;">3420</div>
<div class="r" style="left:1753px;top:539px;width:65px;height:27px;background:#2d8cf0;border-radius:3px;"></div>
<svg class="r" style="left:1764px;top:545px" width="12" height="12" viewBox="0 0 12 12"><path d="M0 12 L0.8 8.8 L8.5 1.1 L10.9 3.5 L3.2 11.2 Z M9.3 0.3 L10.3 -0.2 L12.2 1.7 L11.7 2.7 Z" fill="#fff"/></svg>
<div class="t" style="left:1783px;top:544px;font-size:16px;line-height:18px;color:#fff;">Info</div>
<div class="r" style="left:1823px;top:539px;width:70px;height:27px;background:#fff;border:1px solid #dcdee2;border-radius:14px;"></div>
<div class="t" style="left:1832px;top:544px;font-size:16px;line-height:18px;color:#515a6e;">More</div>
<svg class="r" style="left:1873px;top:550px" width="7" height="4" viewBox="0 0 7 4"><path d="M0 0 L7 0 L3.5 4 Z" fill="#515a6e"/></svg>
<div class="r" style="left:328px;top:620px;width:1585px;height:1px;background:#e8eaec;"></div>
<div class="t" style="left:351px;top:589px;font-size:16px;line-height:18px;color:#575e70;">7</div>
<div class="r" style="left:390px;top:587px;width:18px;height:18px;background:#fff;border:1px solid #dcdee2;border-radius:2px;"></div>
<div class="t" style="left:436px;top:589px;font-size:16px;line-height:18px;color:#575e70;letter-spacing:-0.25px;">15866660008</div>
<div class="t" style="left:648px;top:589px;font-size:16px;line-height:18px;color:#575e70;">书包-张**</div>
<div class="t" style="left:861px;top:589px;font-size:16px;line-height:18px;color:#575e70;letter-spacing:-0.25px;">15866660008</div>
<div class="t" style="left:1072px;top:589px;font-size:16px;line-height:18px;color:#575e70;letter-spacing:-0.15px;">2018-11-08</div>
<div class="t" style="left:1238px;top:589px;font-size:16px;line-height:18px;color:#575e70;letter-spacing:-0.15px;">2018-11-28</div>
<div class="t" style="left:1405px;top:589px;font-size:16px;line-height:18px;color:#575e70;letter-spacing:-0.15px;">2031-10-01</div>
<div class="t" style="left:1572px;top:589px;font-size:16px;line-height:18px;color:#575e70;">3420</div>
<div class="r" style="left:1753px;top:584px;width:65px;height:27px;background:#2d8cf0;border-radius:3px;"></div>
<svg class="r" style="left:1764px;top:590px" width="12" height="12" viewBox="0 0 12 12"><path d="M0 12 L0.8 8.8 L8.5 1.1 L10.9 3.5 L3.2 11.2 Z M9.3 0.3 L10.3 -0.2 L12.2 1.7 L11.7 2.7 Z" fill="#fff"/></svg>
<div class="t" style="left:1783px;top:589px;font-size:16px;line-height:18px;color:#fff;">Info</div>
<div class="r" style="left:1823px;top:584px;width:70px;height:27px;background:#fff;border:1px solid #dcdee2;border-radius:14px;"></div>
<div class="t" style="left:1832px;top:589px;font-size:16px;line-height:18px;color:#515a6e;">More</div>
<svg class="r" style="left:1873px;top:595px" width="7" height="4" viewBox="0 0 7 4"><path d="M0 0 L7 0 L3.5 4 Z" fill="#515a6e"/></svg>
<div class="r" style="left:328px;top:665px;width:1585px;height:1px;background:#e8eaec;"></div>
<div class="t" style="left:351px;top:634px;font-size:16px;line-height:18px;color:#575e70;">8</div>
<div class="r" style="left:390px;top:632px;width:18px;height:18px;background:#fff;border:1px solid #dcdee2;border-radius:2px;"></div>
<div class="t" style="left:436px;top:634px;font-size:16px;line-height:18px;color:#575e70;letter-spacing:-0.25px;">15866660009</div>
<div class="t" style="left:648px;top:634px;font-size:16px;line-height:18px;color:#575e70;">书包-刘**</div>
<div class="t" style="left:861px;top:634px;font-size:16px;line-height:18px;color:#575e70;letter-spacing:-0.25px;">15866660009</div>
<div class="t" style="left:1072px;top:634px;font-size:16px;line-height:18px;color:#575e70;letter-spacing:-0.15px;">2018-11-08</div>
<div class="t" style="left:1238px;top:634px;font-size:16px;line-height:18px;color:#575e70;letter-spacing:-0.15px;">2018-11-28</div>
<div class="t" style="left:1405px;top:634px;font-size:16px;line-height:18px;color:#575e70;letter-spacing:-0.15px;">2031-10-01</div>
<div class="t" style="left:1572px;top:634px;font-size:16px;line-height:18px;color:#575e70;">3420</div>
<div class="r" style="left:1753px;top:629px;width:65px;height:27px;background:#2d8cf0;border-radius:3px;"></div>
<svg class="r" style="left:1764px;top:635px" width="12" height="12" viewBox="0 0 12 12"><path d="M0 12 L0.8 8.8 L8.5 1.1 L10.9 3.5 L3.2 11.2 Z M9.3 0.3 L10.3 -0.2 L12.2 1.7 L11.7 2.7 Z" fill="#fff"/></svg>
<div class="t" style="left:1783px;top:634px;font-size:16px;line-height:18px;color:#fff;">Info</div>
<div class="r" style="left:1823px;top:629px;width:70px;height:27px;background:#fff;border:1px solid #dcdee2;border-radius:14px;"></div>
<div class="t" style="left:1832px;top:634px;font-size:16px;line-height:18px;color:#515a6e;">More</div>
<svg class="r" style="left:1873px;top:640px" width="7" height="4" viewBox="0 0 7 4"><path d="M0 0 L7 0 L3.5 4 Z" fill="#515a6e"/></svg>
<div class="r" style="left:328px;top:710px;width:1585px;height:1px;background:#e8eaec;"></div>
<div class="t" style="left:351px;top:679px;font-size:16px;line-height:18px;color:#575e70;">9</div>
<div class="r" style="left:390px;top:677px;width:18px;height:18px;background:#fff;border:1px solid #dcdee2;border-radius:2px;"></div>
<div class="t" style="left:436px;top:679px;font-size:16px;line-height:18px;color:#575e70;letter-spacing:-0.25px;">15866660010</div>
<div class="t" style="left:648px;top:679px;font-size:16px;line-height:18px;color:#575e70;">手表-明***</div>
<div class="t" style="left:861px;top:679px;font-size:16px;line-height:18px;color:#575e70;letter-spacing:-0.25px;">15866660010</div>
<div class="t" style="left:1072px;top:679px;font-size:16px;line-height:18px;color:#575e70;letter-spacing:-0.15px;">2018-11-08</div>
<div class="t" style="left:1238px;top:679px;font-size:16px;line-height:18px;color:#575e70;letter-spacing:-0.15px;">2018-11-28</div>
<div class="t" style="left:1405px;top:679px;font-size:16px;line-height:18px;color:#575e70;letter-spacing:-0.15px;">2031-10-01</div>
<div class="t" style="left:1572px;top:679px;font-size:16px;line-height:18px;color:#575e70;">3420</div>
<div class="r" style="left:1753px;top:674px;width:65px;height:27px;background:#2d8cf0;border-radius:3px;"></div>
<svg class="r" style="left:1764px;top:680px" width="12" height="12" viewBox="0 0 12 12"><path d="M0 12 L0.8 8.8 L8.5 1.1 L10.9 3.5 L3.2 11.2 Z M9.3 0.3 L10.3 -0.2 L12.2 1.7 L11.7 2.7 Z" fill="#fff"/></svg>
<div class="t" style="left:1783px;top:679px;font-size:16px;line-height:18px;color:#fff;">Info</div>
<div class="r" style="left:1823px;top:674px;width:70px;height:27px;background:#fff;border:1px solid #dcdee2;border-radius:14px;"></div>
<div class="t" style="left:1832px;top:679px;font-size:16px;line-height:18px;color:#515a6e;">More</div>
<svg class="r" style="left:1873px;top:685px" width="7" height="4" viewBox="0 0 7 4"><path d="M0 0 L7 0 L3.5 4 Z" fill="#515a6e"/></svg>
<div class="r" style="left:328px;top:755px;width:1585px;height:1px;background:#e8eaec;"></div>
<div class="t" style="left:347px;top:724px;font-size:16px;line-height:18px;color:#575e70;">10</div>
<div class="r" style="left:390px;top:722px;width:18px;height:18px;background:#fff;border:1px solid #dcdee2;border-radius:2px;"></div>
<div class="t" style="left:436px;top:724px;font-size:16px;line-height:18px;color:#575e70;letter-spacing:-0.25px;">15866660011</div>
<div class="t" style="left:648px;top:724px;font-size:16px;line-height:18px;color:#575e70;">宠物-孙**</div>
<div class="t" style="left:861px;top:724px;font-size:16px;line-height:18px;color:#575e70;letter-spacing:-0.25px;">15866660011</div>
<div class="t" style="left:1072px;top:724px;font-size:16px;line-height:18px;color:#575e70;letter-spacing:-0.15px;">2018-11-08</div>
<div class="t" style="left:1238px;top:724px;font-size:16px;line-height:18px;color:#575e70;letter-spacing:-0.15px;">2018-11-28</div>
<div class="t" style="left:1405px;top:724px;font-size:16px;line-height:18px;color:#575e70;letter-spacing:-0.15px;">2031-10-01</div>
<div class="t" style="left:1572px;top:724px;font-size:16px;line-height:18px;color:#575e70;">3420</div>
<div class="r" style="left:1753px;top:719px;width:65px;height:27px;background:#2d8cf0;border-radius:3px;"></div>
<svg class="r" style="left:1764px;top:725px" width="12" height="12" viewBox="0 0 12 12"><path d="M0 12 L0.8 8.8 L8.5 1.1 L10.9 3.5 L3.2 11.2 Z M9.3 0.3 L10.3 -0.2 L12.2 1.7 L11.7 2.7 Z" fill="#fff"/></svg>
<div class="t" style="left:1783px;top:724px;font-size:16px;line-height:18px;color:#fff;">Info</div>
<div class="r" style="left:1823px;top:719px;width:70px;height:27px;background:#fff;border:1px solid #dcdee2;border-radius:14px;"></div>
<div class="t" style="left:1832px;top:724px;font-size:16px;line-height:18px;color:#515a6e;">More</div>
<svg class="r" style="left:1873px;top:730px" width="7" height="4" viewBox="0 0 7 4"><path d="M0 0 L7 0 L3.5 4 Z" fill="#515a6e"/></svg>
<svg class="r" style="left:361px;top:893px" width="11" height="13" viewBox="0 0 11 13"><path d="M3.5 0 H7.5 V5 H11 L5.5 10 L0 5 H3.5 Z" fill="#515a6e"/><rect x="0" y="11.3" width="11" height="1.7" fill="#515a6e"/></svg>
<div class="t" style="left:379px;top:891px;font-size:16px;line-height:18px;color:#515a6e;">Export</div>
<svg class="r" style="left:454px;top:892px" width="16" height="16" viewBox="0 0 16 16"><path d="M4.6 2.8 Q7.5 -1 10.4 3.2" fill="none" stroke="#4a4f63" stroke-width="2"/><path d="M13.3 3 L12 7 L8.2 5.4 Z" fill="#4a4f63"/><path d="M13.8 8.4 Q16.2 13 11.5 13.2 L8.5 13.2" fill="none" stroke="#4a4f63" stroke-width="2"/><path d="M9.2 10.2 L6 13.1 L9.2 15.6 Z" fill="#4a4f63"/><path d="M3.6 13.3 Q-0.8 12 1.9 7.6" fill="none" stroke="#4a4f63" stroke-width="2"/><path d="M0 5.6 L4.1 4.3 L4.9 8.4 Z" fill="#4a4f63"/></svg>
<div class="t" style="left:474px;top:890px;font-size:16px;line-height:18px;color:#515a6e;">Recycle</div>
<div class="t" style="left:1393px;top:889px;font-size:16px;line-height:18px;color:#c5c8ce;">Total 29 items</div>
<div class="r" style="left:1505px;top:884px;width:26px;height:27px;background:#fff;border-radius:4px;"></div>
<div class="r" style="left:1536px;top:884px;width:27px;height:27px;background:#fff;border-radius:4px;"></div>
<div class="r" style="left:1568px;top:884px;width:25px;height:27px;background:#fff;border-radius:4px;"></div>
<div class="r" style="left:1599px;top:884px;width:27px;height:27px;background:#fff;border-radius:4px;"></div>
<div class="r" style="left:1630px;top:884px;width:27px;height:27px;background:#fff;border-radius:4px;"></div>
<svg class="r" style="left:1514px;top:891px" width="8" height="12" viewBox="0 0 8 12"><path d="M6 1 L1.5 6 L6 11" fill="none" stroke="#808695" stroke-width="1.4"/></svg>
<svg class="r" style="left:1639px;top:889px" width="8" height="12" viewBox="0 0 8 12"><path d="M2 1 L6.5 6 L2 11" fill="none" stroke="#515a6e" stroke-width="1.4"/></svg>
<div class="t" style="left:1545px;top:890px;font-size:16px;line-height:18px;color:#2d8cf0;">1</div>
<div class="t" style="left:1576px;top:890px;font-size:16px;line-height:18px;color:#515a6e;">2</div>
<div class="t" style="left:1608px;top:890px;font-size:16px;line-height:18px;color:#515a6e;">3</div>
<div class="r" style="left:1671px;top:886px;width:99px;height:26px;background:#fff;border:1px solid #dcdee2;border-radius:4px;"></div>
<div class="t" style="left:1681px;top:890px;font-size:16px;line-height:18px;color:#515a6e;">10 /page</div>
<svg class="r" style="left:1746px;top:895px" width="11" height="7" viewBox="0 0 11 7"><path d="M1 1 L5.5 5.5 L10 1" fill="none" stroke="#515a6e" stroke-width="1.4"/></svg>
<div class="t" style="left:1786px;top:892px;font-size:16px;line-height:18px;color:#c5c8ce;">Goto</div>
<div class="r" style="left:1833px;top:886px;width:50px;height:26px;background:#fff;border:1px solid #dcdee2;border-radius:4px;"></div>
<div class="t" style="left:1843px;top:892px;font-size:16px;line-height:18px;color:#515a6e;">1</div>
<div class="r" style="left:1902px;top:422px;width:18px;height:90px;background:#d8d2da;box-shadow:-3px 2px 6px rgba(0,0,0,0.12);"></div>
<svg class="r" style="left:1908px;top:470px" width="12" height="42" viewBox="0 0 12 42"><path d="M12 7 L5 31 L9 42 L12 42 Z" fill="#1c1418"/></svg>
<div class="r" style="left:189px;top:10px;width:958px;height:61px;border:3px solid #e53a3f;"></div>
</body></html>
